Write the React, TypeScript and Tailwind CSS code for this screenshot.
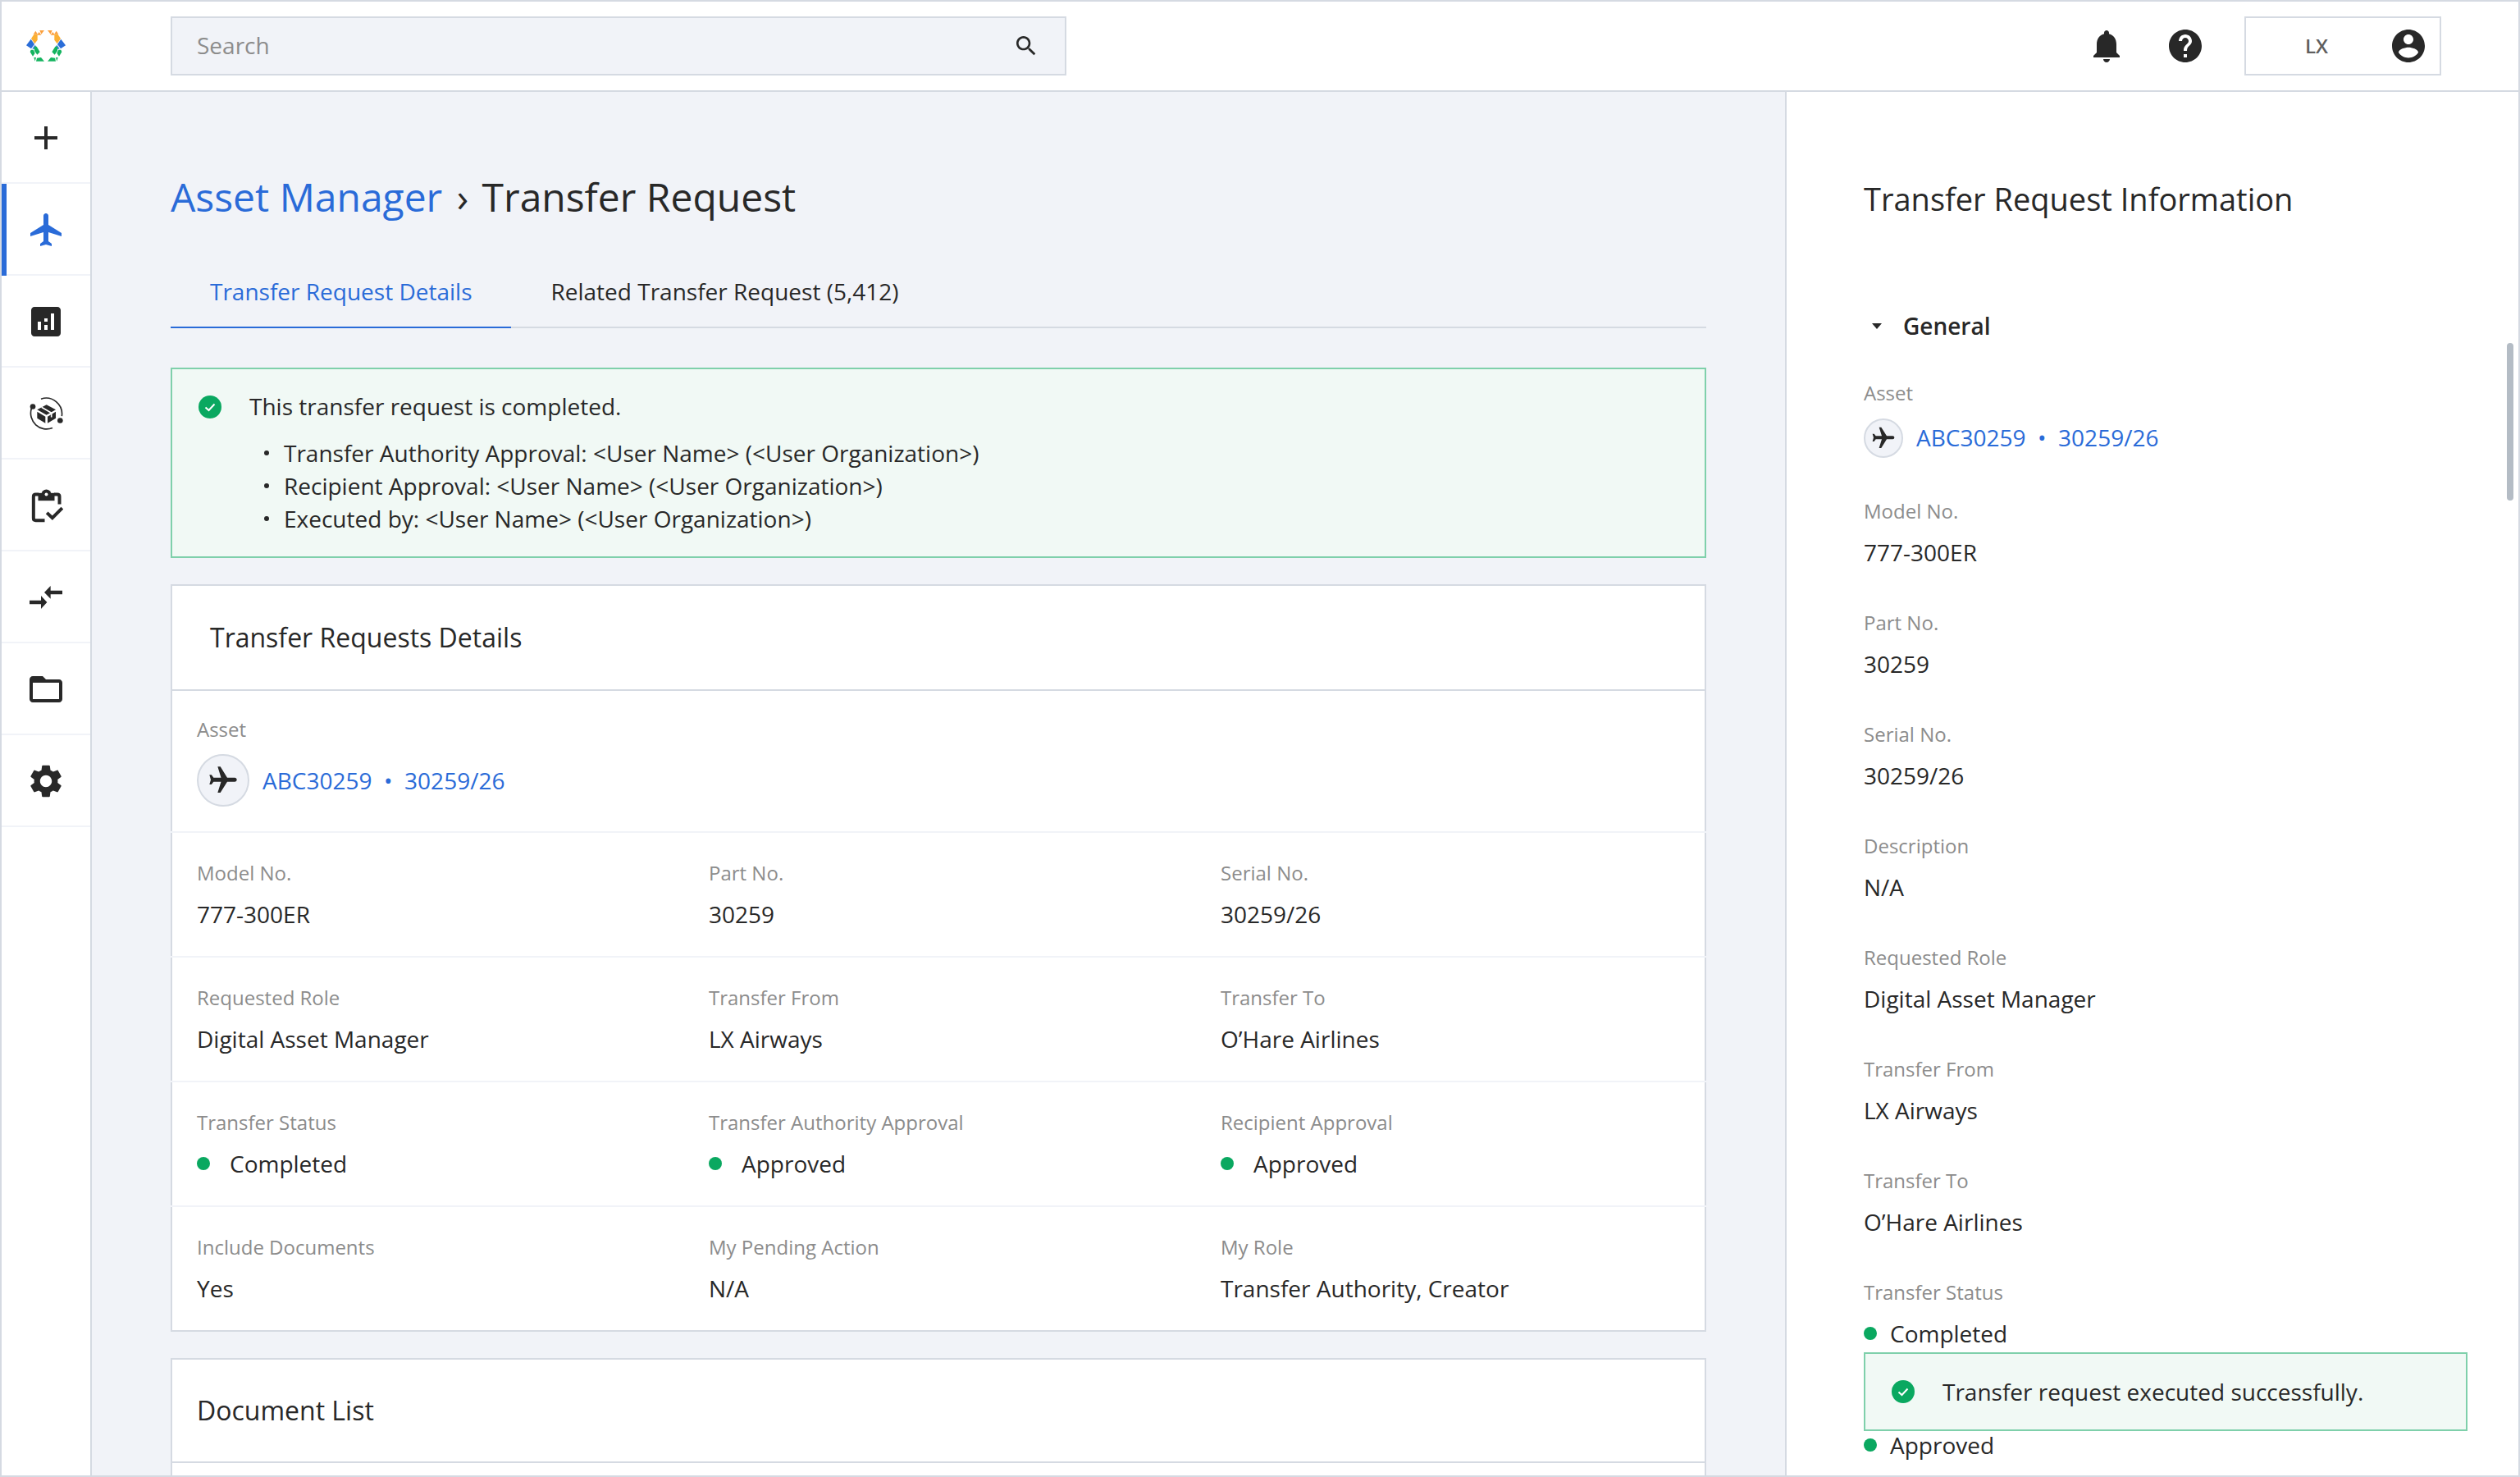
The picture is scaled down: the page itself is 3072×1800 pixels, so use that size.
import React from "react";

const INK = "#282828";

function M({ d, size = 48, color = INK, className = "" }: { d: string; size?: number; color?: string; className?: string }) {
  return (
    <svg width={size} height={size} viewBox="0 0 24 24" fill={color} className={className}>
      <path d={d} />
    </svg>
  );
}

const PLANE = "M21 16v-2l-8-5V3.5c0-.83-.67-1.5-1.5-1.5S10 2.67 10 3.5V9l-8 5v2l8-2.5V19l-2 1.5V22l3.5-1 3.5 1v-1.5L13 19v-5.5l8 2.5z";
const ADD = "M19 13h-6v6h-2v-6H5v-2h6V5h2v6h6v2z";
const ANALYTICS = "M19 3H5c-1.1 0-2 .9-2 2v14c0 1.1.9 2 2 2h14c1.1 0 2-.9 2-2V5c0-1.1-.9-2-2-2zM9 17H7v-5h2v5zm4 0h-2v-3h2v3zm0-5h-2v-2h2v2zm4 5h-2V7h2v10z";
const FOLDER = "M20 6h-8l-2-2H4c-1.1 0-1.99.9-1.99 2L2 18c0 1.1.9 2 2 2h16c1.1 0 2-.9 2-2V8c0-1.1-.9-2-2-2zm0 12H4V8h16v10z";
const SETTINGS = "M19.14 12.94c.04-.3.06-.61.06-.94 0-.32-.02-.64-.07-.94l2.03-1.58c.18-.14.23-.41.12-.61l-1.92-3.32c-.12-.22-.37-.29-.59-.22l-2.39.96c-.5-.38-1.03-.7-1.62-.94l-.36-2.54c-.04-.24-.24-.41-.48-.41h-3.84c-.24 0-.43.17-.47.41l-.36 2.54c-.59.24-1.13.57-1.62.94l-2.39-.96c-.22-.08-.47 0-.59.22L2.74 8.87c-.12.21-.08.47.12.61l2.03 1.58c-.05.3-.09.63-.09.94s.02.64.07.94l-2.03 1.58c-.18.14-.23.41-.12.61l1.92 3.32c.12.22.37.29.59.22l2.39-.96c.5.38 1.03.7 1.62.94l.36 2.54c.05.24.24.41.48.41h3.84c.24 0 .44-.17.47-.41l.36-2.54c.59-.24 1.13-.56 1.62-.94l2.39.96c.22.08.47 0 .59-.22l1.92-3.32c.12-.22.07-.47-.12-.61l-2.01-1.58zM12 15.6c-1.98 0-3.6-1.62-3.6-3.6s1.62-3.6 3.6-3.6 3.6 1.62 3.6 3.6-1.62 3.6-3.6 3.6z";
const SEARCH = "M15.5 14h-.79l-.28-.27C15.41 12.59 16 11.11 16 9.5 16 5.91 13.09 3 9.5 3S3 5.91 3 9.5 5.91 16 9.5 16c1.61 0 3.09-.59 4.23-1.57l.27.28v.79l5 4.99L20.49 19l-4.99-5zm-6 0C7.01 14 5 11.99 5 9.5S7.01 5 9.5 5 14 7.01 14 9.5 11.99 14 9.5 14z";
const BELL = "M12 22c1.1 0 2-.9 2-2h-4c0 1.1.89 2 2 2zm6-6v-5c0-3.07-1.64-5.64-4.5-6.32V4c0-.83-.67-1.5-1.5-1.5s-1.5.67-1.5 1.5v.68C7.63 5.36 6 7.92 6 11v5l-2 2v1h16v-1l-2-2z";
const HELP = "M12 2C6.48 2 2 6.48 2 12s4.48 10 10 10 10-4.48 10-10S17.52 2 12 2zm1 17h-2v-2h2v2zm2.07-7.75l-.9.92C13.45 12.9 13 13.5 13 15h-2v-.5c0-1.1.45-2.1 1.17-2.83l1.24-1.26c.37-.36.59-.86.59-1.41 0-1.1-.9-2-2-2s-2 .9-2 2H8c0-2.21 1.79-4 4-4s4 1.79 4 4c0 .88-.36 1.68-.93 2.25z";
const ACCOUNT = "M12 2C6.48 2 2 6.48 2 12s4.48 10 10 10 10-4.48 10-10S17.52 2 12 2zm0 3c1.66 0 3 1.34 3 3s-1.34 3-3 3-3-1.34-3-3 1.34-3 3-3zm0 14.2c-2.5 0-4.71-1.28-6-3.22.03-1.99 4-3.08 6-3.08 1.99 0 5.97 1.09 6 3.08-1.29 1.94-3.5 3.22-6 3.22z";

function Logo() {
  const half = (
    <>
      <polygon fill="#fb9f3c" points="145,111 162,111 151,125" />
      <polygon fill="#fb9f3c" points="130,113 138,125 122,125" />
      <polygon fill="#fb9f3c" points="143,117 151,128 135,128" />
      <polygon fill="#fbb034" points="124,126 137,126 137,146 127,160 114,141" />
      <polygon fill="#2a6dd8" points="113,143 126,162 114,178 96,166" />
      <polygon fill="#3b82e0" points="128,164 135,174 124,180 118,178" />
      <polygon fill="#14b45f" points="113,182 122,182 128,194 120,206 110,190" />
      <polygon fill="#14b45f" points="125,170 134,170 146,190 136,200 126,186" />
      <polygon fill="#14b45f" points="124,210 132,210 128,224" />
      <polygon fill="#14b45f" points="135,212 150,210 162,224 132,224" />
    </>
  );
  return (
    <svg width="48" height="40" viewBox="96 108 144 120">
      {half}
      <g transform="translate(336 0) scale(-1 1)">{half}</g>
    </svg>
  );
}

function PackageOrbit() {
  return (
    <svg width="45" height="45" viewBox="100 64.5 135 135" fill="none">
      <path d="M148 77 A58 58 0 0 1 224 140" stroke={INK} strokeWidth="5" />
      <path d="M113 112 A58 58 0 0 0 190 183" stroke={INK} strokeWidth="5" />
      <circle cx="118" cy="105" r="10" fill={INK} />
      <circle cx="218" cy="156" r="10" fill={INK} />
      <polygon fill={INK} points="168,98 202,116 168,136 134,116" />
      <polygon fill={INK} points="134,124 164,142 164,166 134,148" />
      <polygon fill={INK} points="172,142 202,124 202,148 172,166" />
      <path d="M150 107 L186 128 V144" stroke="#fff" strokeWidth="5" />
    </svg>
  );
}

function ClipboardCheck() {
  return (
    <svg width="41" height="41" viewBox="106.5 406.5 123 123" fill="none">
      <path d="M140 426 H129 Q121 426 121 434 V513 Q121 521 129 521 H162" stroke={INK} strokeWidth="12" />
      <path d="M196 426 H208 Q216 426 216 434 V462" stroke={INK} strokeWidth="12" />
      <rect x="138" y="421" width="60" height="28" fill={INK} />
      <circle cx="168" cy="426" r="18" fill={INK} />
      <circle cx="168" cy="426" r="6" fill="#fff" />
      <path d="M170 493 L190 512 L226 476" stroke={INK} strokeWidth="12" />
    </svg>
  );
}

function TransferArrows() {
  return (
    <svg width="40" height="28" viewBox="108 762 120 84" fill={INK}>
      <polygon points="162,786 185,762 185,779 228,779 228,793 185,793 185,809" />
      <polygon points="172,822 150,798 150,815 108,815 108,829 150,829 150,846" />
    </svg>
  );
}

function CheckCircle({ size = 28 }: { size?: number }) {
  return (
    <svg width={size} height={size} viewBox="0 0 28 28" className="shrink-0">
      <circle cx="14" cy="14" r="14" fill="#0aa860" />
      <path d="M8.5 14.5 L12.5 18 L19.5 10.5" fill="none" stroke="#fff" strokeWidth="2" />
    </svg>
  );
}

function NavItem({ children, active = false }: { children: React.ReactNode; active?: boolean }) {
  return (
    <div className={"relative flex h-[112px] items-center justify-center border-b-2 border-[#f1f3f8] pt-[2px] " + (active ? "pl-[2px]" : "")}>
      {active && <div className="absolute left-0 top-0 h-[112px] w-[6px] bg-[#2a6bd8]" />}
      {children}
    </div>
  );
}

function Label({ children }: { children: React.ReactNode }) {
  return <div className="text-[24px] leading-[32px] text-[#8c8c8c]">{children}</div>;
}

function Cell({ label, value, dot = false }: { label: string; value: string; dot?: boolean }) {
  return (
    <div className="pl-[32px]">
      <Label>{label}</Label>
      <div className="mt-[14px] flex items-center text-[28px] leading-[40px] text-[#282828]">
        {dot && <span className="mr-[24px] h-[16px] w-[16px] rounded-full bg-[#0aa860]" />}
        {value}
      </div>
    </div>
  );
}

function Row({ children, last = false }: { children: React.ReactNode; last?: boolean }) {
  return (
    <div className={"-mx-[2px] grid grid-cols-3 pb-[31px] pt-[33px] " + (last ? "" : "border-b-2 border-[#f1f3f8]")}>{children}</div>
  );
}

function Field({ label, value, dot = false }: { label: string; value?: string; dot?: boolean }) {
  return (
    <div className="mb-[50px]">
      <Label>{label}</Label>
      <div className="mt-[14px] flex items-center text-[28px] leading-[40px] text-[#282828]">
        {dot && <span className="mr-[16px] h-[16px] w-[16px] rounded-full bg-[#0aa860]" />}
        {value}
      </div>
    </div>
  );
}

function AssetLink({ circle, icon, gap, lift = "" }: { circle: string; icon: number; gap: string; lift?: string }) {
  return (
    <div className={"flex items-center " + gap}>
      <div className={"flex items-center justify-center rounded-full border-2 border-[#d5dae2] bg-[#f1f3f8] " + circle}>
        <M d={PLANE} size={icon} className="rotate-90" />
      </div>
      <div className={"whitespace-pre text-[28px] leading-[40px] text-[#2a6bd8] " + lift}>ABC30259  •  30259/26</div>
    </div>
  );
}

const BULLETS = [
  "Transfer Authority Approval: <User Name> (<User Organization>)",
  "Recipient Approval: <User Name> (<User Organization>)",
  "Executed by: <User Name> (<User Organization>)",
];

export default function App() {
  return (
    <div className="relative flex h-[1800px] w-[3072px] flex-col overflow-hidden border-2 border-[#d5dae2] bg-white font-['Open_Sans',sans-serif] text-[#282828]">
      <header className="flex h-[110px] shrink-0 items-center border-b-2 border-[#d5dae2]">
        <div className="flex w-[108px] shrink-0 items-center justify-center">
          <Logo />
        </div>
        <div className="ml-[98px] flex h-[72px] w-[1092px] items-center justify-between border-2 border-[#d5dae2] bg-[#f1f3f8] pl-[30px] pr-[31px]">
          <span className="mb-[2px] text-[28px] text-[#8c8c8c]">Search</span>
          <M d={SEARCH} size={32} />
        </div>
        <div className="ml-auto mr-[94px] flex items-center">
          <M d={BELL} size={48} />
          <M d={HELP} size={48} className="ml-[48px]" />
          <div className="ml-[48px] flex h-[72px] w-[240px] items-center border-2 border-[#d5dae2] pl-[72px] pr-[14px]">
            <span className="text-[24px] font-semibold text-[#5f5f5f]">LX</span>
            <M d={ACCOUNT} size={48} className="ml-auto" />
          </div>
        </div>
      </header>

      <div className="flex min-h-0 flex-1">
        <nav className="w-[110px] shrink-0 border-r-2 border-[#d5dae2] bg-white">
          <NavItem><M d={ADD} /></NavItem>
          <NavItem active><M d={PLANE} color="#2a6bd8" /></NavItem>
          <NavItem><M d={ANALYTICS} /></NavItem>
          <NavItem><PackageOrbit /></NavItem>
          <NavItem><ClipboardCheck /></NavItem>
          <NavItem><TransferArrows /></NavItem>
          <NavItem><M d={FOLDER} /></NavItem>
          <NavItem><M d={SETTINGS} /></NavItem>
        </nav>

        <main className="min-w-0 flex-1 overflow-hidden bg-[#f1f3f8] pl-[96px] pr-[96px] pt-[92px]">
          <h1 className="flex h-[72px] items-center whitespace-pre text-[48px] leading-[72px]">
            <span className="text-[#2a6bd8]">Asset Manager</span>
            <span className="ml-[5px]"> › </span>
            <span className="ml-[4px]">Transfer Request</span>
          </h1>
          <div className="mt-[36px] flex h-[88px] border-b-2 border-[#d5dae2]">
            <div className="-mb-[2px] flex h-[88px] items-center border-b-2 border-[#2a6bd8] px-[48px] text-[28px] text-[#2a6bd8]">Transfer Request Details</div>
            <div className="flex h-[86px] items-center px-[48px] text-[28px]">Related Transfer Request (5,412)</div>
          </div>

          <section className="mt-[48px] h-[232px] border-2 border-[#7fd0ab] bg-[#f1f9f5] pl-[32px] pt-[26px]">
            <div className="flex h-[40px] items-center text-[28px]">
              <CheckCircle />
              <span className="mb-[2px] ml-[34px] leading-[38px]">This transfer request is completed.</span>
            </div>
            <ul className="mt-[16px] pl-[80px]">
              {BULLETS.map((b) => (
                <li key={b} className="flex items-center text-[28px] leading-[40px]">
                  <span className="mr-[18px] h-[6px] w-[6px] rounded-full bg-[#282828]" />
                  {b}
                </li>
              ))}
            </ul>
          </section>

          <section className="mt-[32px] border-2 border-[#d5dae2] bg-white">
            <div className="flex h-[128px] items-center border-b-2 border-[#d5dae2] pl-[46px] text-[32px]">Transfer Requests Details</div>
            <div className="-mx-[2px] border-b-2 border-[#f1f3f8] pb-[30px] pl-[32px] pt-[32px]">
              <div className="-mt-[1px] mb-[1px]">
                <Label>Asset</Label>
              </div>
              <div className="mt-[14px]">
                <AssetLink circle="h-[64px] w-[64px]" icon={40} gap="gap-[16px]" />
              </div>
            </div>
            <Row>
              <Cell label="Model No." value="777-300ER" />
              <Cell label="Part No." value="30259" />
              <Cell label="Serial No." value="30259/26" />
            </Row>
            <Row>
              <Cell label="Requested Role" value="Digital Asset Manager" />
              <Cell label="Transfer From" value="LX Airways" />
              <Cell label="Transfer To" value="O’Hare Airlines" />
            </Row>
            <Row>
              <Cell label="Transfer Status" value="Completed" dot />
              <Cell label="Transfer Authority Approval" value="Approved" dot />
              <Cell label="Recipient Approval" value="Approved" dot />
            </Row>
            <Row last>
              <Cell label="Include Documents" value="Yes" />
              <Cell label="My Pending Action" value="N/A" />
              <Cell label="My Role" value="Transfer Authority, Creator" />
            </Row>
          </section>

          <section className="mt-[32px] h-[300px] border-2 border-[#d5dae2] bg-white">
            <div className="flex h-[126px] items-center border-b-2 border-[#d5dae2] pl-[30px] text-[32px]">Document List</div>
          </section>
        </main>

        <aside className="relative w-[894px] shrink-0 overflow-hidden border-l-2 border-[#d5dae2] bg-white pl-[94px] pt-[107px]">
          <h2 className="h-[46px] text-[38px] leading-[46px]">Transfer Request Information</h2>
          <div className="mt-[112px] flex h-[40px] items-center text-[28px] font-semibold">
            <svg width="12" height="7" viewBox="0 0 12 7" className="ml-[10px]">
              <polygon points="0,0 12,0 6,7" fill={INK} />
            </svg>
            <span className="ml-[26px]">General</span>
          </div>
          <div className="mt-[46px]">
            <div className="mb-[49px]">
              <Label>Asset</Label>
              <div className="mt-[15px]">
                <AssetLink circle="h-[48px] w-[48px]" icon={32} gap="gap-[16px]" lift="mb-[2px]" />
              </div>
            </div>
            <Field label="Model No." value="777-300ER" />
            <Field label="Part No." value="30259" />
            <Field label="Serial No." value="30259/26" />
            <Field label="Description" value="N/A" />
            <Field label="Requested Role" value="Digital Asset Manager" />
            <Field label="Transfer From" value="LX Airways" />
            <Field label="Transfer To" value="O’Hare Airlines" />
            <Field label="Transfer Status" value="Completed" dot />
            <Field label={"\u00a0"} value="Approved" dot />
          </div>
          <div className="absolute right-[6px] top-[306px] h-[192px] w-[8px] rounded-full bg-[#b4bcc5]" />
          <div className="absolute bottom-[54px] left-[94px] flex h-[96px] w-[736px] items-center border-2 border-[#7fd0ab] bg-[#f1f9f5] pl-[32px]">
            <CheckCircle />
            <span className="ml-[34px] text-[28px] leading-[40px]">Transfer request executed successfully.</span>
          </div>
        </aside>
      </div>
    </div>
  );
}
